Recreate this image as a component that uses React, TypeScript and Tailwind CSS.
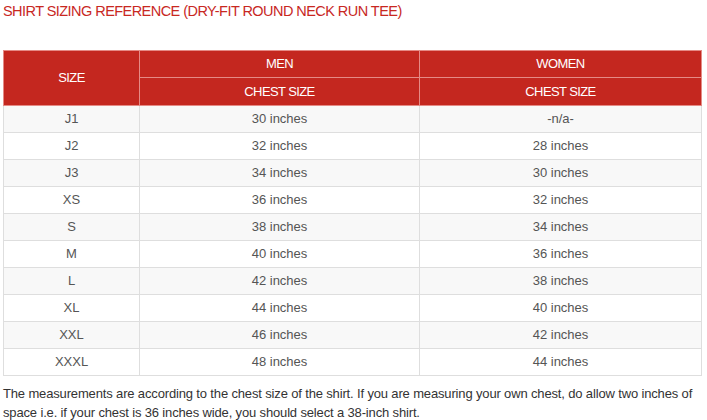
const rows: [string, string, string][] = [
  ["J1", "30 inches", "-n/a-"],
  ["J2", "32 inches", "28 inches"],
  ["J3", "34 inches", "30 inches"],
  ["XS", "36 inches", "32 inches"],
  ["S", "38 inches", "34 inches"],
  ["M", "40 inches", "36 inches"],
  ["L", "42 inches", "38 inches"],
  ["XL", "44 inches", "40 inches"],
  ["XXL", "46 inches", "42 inches"],
  ["XXXL", "48 inches", "44 inches"],
];

export default function App() {
  return (
    <div className="h-[420px] w-[707px] overflow-hidden bg-white font-['Liberation_Sans',Arial,sans-serif]">
      <h1 className="pl-[3px] pt-[2px] text-[14.5px] leading-[18px] tracking-[-0.55px] text-[#c8281f]">
        SHIRT SIZING REFERENCE (DRY-FIT ROUND NECK RUN TEE)
      </h1>

      <table className="ml-[3px] mt-[30px] w-[698px] table-fixed border-collapse text-center text-[13px]">
        <colgroup>
          <col className="w-[136px]" />
          <col className="w-[280px]" />
          <col className="w-[282px]" />
        </colgroup>
        <thead className="bg-[#c4271f] text-white tracking-[-0.6px]">
          <tr className="h-[27px]">
            <th rowSpan={2} className="border border-[#e58a85] font-normal">
              SIZE
            </th>
            <th className="border border-[#e58a85] font-normal">MEN</th>
            <th className="border border-[#e58a85] font-normal">WOMEN</th>
          </tr>
          <tr className="h-[28px]">
            <th className="border border-[#e58a85] font-normal">CHEST SIZE</th>
            <th className="border border-[#e58a85] font-normal">CHEST SIZE</th>
          </tr>
        </thead>
        <tbody className="text-[#555]">
          {rows.map(([size, men, women], i) => (
            <tr key={size} className={i % 2 === 0 ? "h-[27px] bg-[#f8f8f8]" : "h-[27px] bg-white"}>
              <td className="border border-[#dedede]">{size}</td>
              <td className="border border-[#dedede]">{men}</td>
              <td className="border border-[#dedede]">{women}</td>
            </tr>
          ))}
        </tbody>
      </table>

      <p className="mt-[8px] pl-[3px] text-[13px] leading-[19px] tracking-[-0.15px] text-[#333]">
        The measurements are according to the chest size of the shirt. If you are measuring your own chest, do allow two inches of
        space i.e. if your chest is 36 inches wide, you should select a 38-inch shirt.
      </p>
    </div>
  );
}
